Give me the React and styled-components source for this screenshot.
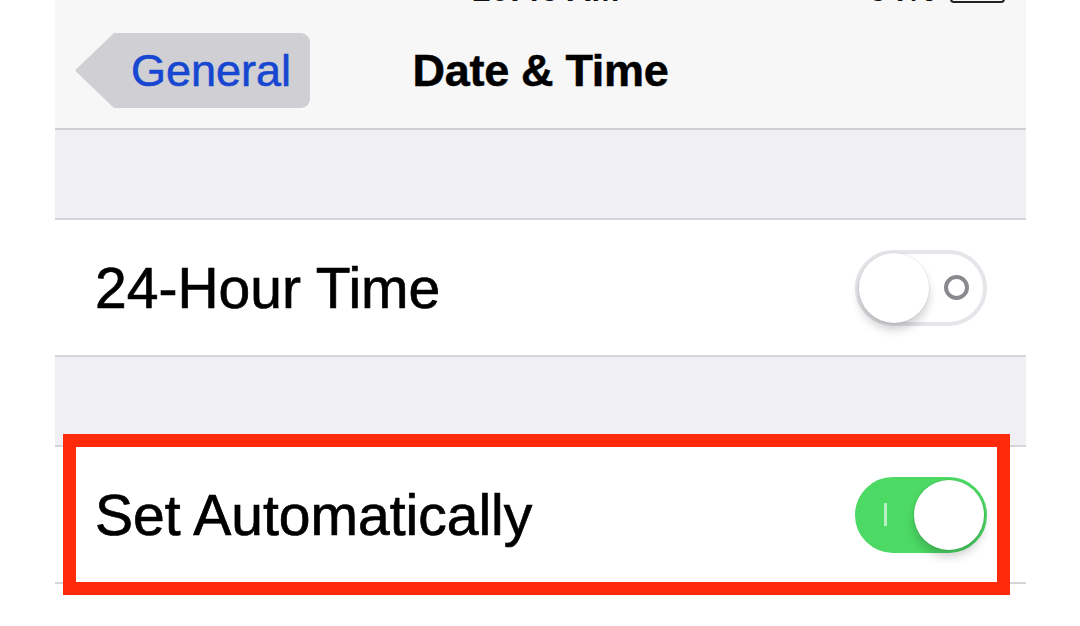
import React from 'react';
import styled, { createGlobalStyle } from 'styled-components';

const GlobalStyle = createGlobalStyle`
  html, body {
    margin: 0;
    padding: 0;
    background: #fff;
  }
  body {
    font-family: "Liberation Sans", Arial, sans-serif;
    -webkit-font-smoothing: antialiased;
  }
`;

const Screen = styled.div`
  width: 971px;
  min-height: 626px;
  margin-left: 55px;
  display: flex;
  flex-direction: column;
  background: #fff;
`;

const NavBar = styled.header`
  height: 128px;
  background: #f7f7f7;
  border-bottom: 2px solid #d0d0d4;
  display: flex;
  flex-direction: column;
`;

// only the bottom few pixels of the status bar are in frame
const StatusBar = styled.div`
  height: 6px;
  overflow: hidden;
  display: grid;
  grid-template-columns: 1fr auto 1fr;
  grid-template-rows: 6px;
  align-items: end;
`;

const StatusText = styled.span`
  font-size: 34px;
  line-height: 34px;
  font-weight: 700;
  color: #111;
  margin-left: ${({ $shift }) => $shift || 0}px;
`;

const StatusRight = styled.div`
  height: 6px;
  display: flex;
  justify-content: flex-end;
  align-items: flex-end;
  gap: 14px;
  padding-right: 21px;
`;

const Battery = styled.div`
  flex: none;
  width: 55px;
  height: 24px;
  box-sizing: border-box;
  border: 2px solid #222;
  border-radius: 4px;
  margin-bottom: 3px;
`;

const NavRow = styled.div`
  flex: 1;
  display: grid;
  grid-template-columns: 1fr auto 1fr;
  align-items: center;
  padding-top: 7px;
`;

const BackButton = styled.div`
  position: relative;
  justify-self: start;
  margin-left: 59px;
  height: 75px;
  padding: 0 19px 0 17px;
  display: flex;
  align-items: center;
  background: #d0d0d4;
  border-radius: 0 9px 9px 0;
  font-size: 45px;
  color: #1747d1;
  -webkit-text-stroke: 0.6px #1747d1;

  &::before {
    content: '';
    position: absolute;
    left: -39px;
    top: 0;
    width: 39px;
    height: 100%;
    background: #d0d0d4;
    clip-path: polygon(100% 0, 3px 46%, 0 50%, 3px 54%, 100% 100%);
  }
`;

const Title = styled.h1`
  margin: 0;
  font-size: 45px;
  font-weight: 700;
  color: #000;
  letter-spacing: -0.3px;
  -webkit-text-stroke: 0.5px #000;
`;

const Spacer = styled.div`
  height: 88px;
  background: #efeff4;
`;

const Group = styled.section`
  position: relative;
  background: #fff;
  border-top: 2px solid #d6d6da;
  border-bottom: 2px solid #d6d6da;
`;

const Row = styled.div`
  height: 135px;
  display: flex;
  align-items: center;
  justify-content: space-between;
  padding: 0 39px 0 40px;
`;

const Label = styled.span`
  font-size: 57px;
  color: #000;
  -webkit-text-stroke: 0.7px #000;
`;

const Track = styled.div`
  position: relative;
  width: 132px;
  height: 76px;
  box-sizing: border-box;
  border-radius: 38px;
  background: ${({ $on }) => ($on ? '#4cd964' : '#fff')};
  border: 4px solid ${({ $on }) => ($on ? '#4cd964' : '#e5e5ea')};
`;

const Knob = styled.div`
  position: absolute;
  top: -1px;
  left: ${({ $on }) => ($on ? '55px' : '0')};
  width: 70px;
  height: 70px;
  border-radius: 50%;
  background: #fff;
  box-shadow: 0 7px 10px rgba(0, 0, 0, 0.18), 0 0 0 1px rgba(0, 0, 0, 0.05);
`;

const OffMark = styled.div`
  position: absolute;
  left: 85px;
  top: 21px;
  width: 25px;
  height: 25px;
  box-sizing: border-box;
  border: 4px solid #8a8a8e;
  border-radius: 50%;
`;

const OnMark = styled.div`
  position: absolute;
  left: 25px;
  top: 22px;
  width: 3px;
  height: 23px;
  background: rgba(255, 255, 255, 0.6);
`;

const Highlight = styled.div`
  position: absolute;
  top: -13px;
  bottom: -13px;
  left: 8px;
  right: 16px;
  border: 13px solid #ff2a0a;
  pointer-events: none;
`;

function Toggle({ on }) {
  return (
    <Track $on={on}>
      {on ? <OnMark /> : <OffMark />}
      <Knob $on={on} />
    </Track>
  );
}

export default function App() {
  return (
    <>
      <GlobalStyle />
      <Screen>
        <NavBar>
          <StatusBar>
            <span />
            <StatusText $shift={10}>10:46 AM</StatusText>
            <StatusRight>
              <StatusText>64%</StatusText>
              <Battery />
            </StatusRight>
          </StatusBar>
          <NavRow>
            <BackButton>General</BackButton>
            <Title>Date &amp; Time</Title>
            <span />
          </NavRow>
        </NavBar>
        <Spacer />
        <Group>
          <Row>
            <Label>24-Hour Time</Label>
            <Toggle on={false} />
          </Row>
        </Group>
        <Spacer />
        <Group>
          <Row>
            <Label>Set Automatically</Label>
            <Toggle on />
          </Row>
          <Highlight />
        </Group>
      </Screen>
    </>
  );
}
